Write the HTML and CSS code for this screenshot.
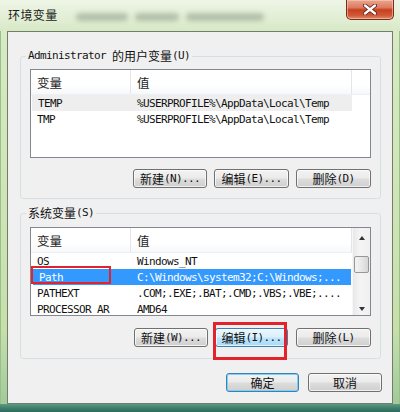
FILE: index.html
```html
<!DOCTYPE html>
<html lang="zh-CN">
<head>
<meta charset="utf-8">
<title>环境变量</title>
<link rel="stylesheet" href="styles.css">
</head>
<body>
<div class="window">
  <div class="titlebar">
    <span class="title">环境变量</span>
    <div class="ghost">
      <span class="blob b1"></span>
      <span class="blob b2"></span>
      <span class="blob b3"></span>
    </div>
    <button class="close" aria-label="关闭">
      <svg width="14" height="11" viewBox="0 0 14 11">
        <path d="M2 1.5 L12 9.5 M12 1.5 L2 9.5" stroke="#5a1a10" stroke-width="4" stroke-linecap="round"/>
        <path d="M2 1.5 L12 9.5 M12 1.5 L2 9.5" stroke="#ffffff" stroke-width="2.4" stroke-linecap="round"/>
      </svg>
    </button>
  </div>

  <div class="client">
    <fieldset class="group g-user">
      <legend><span class="a">Administrator </span>的用户变量<span class="a">(U)</span></legend>
      <div class="list">
        <div class="pane">
          <div class="header">
            <span class="hc c1">变量</span>
            <span class="hc c2">值</span>
            <span class="hc fill"></span>
          </div>
          <div class="row inactive"><span class="c1 a">TEMP</span><span class="c2 a">%USERPROFILE%\AppData\Local\Temp</span></div>
          <div class="row"><span class="c1 a">TMP</span><span class="c2 a">%USERPROFILE%\AppData\Local\Temp</span></div>
        </div>
      </div>
      <div class="btns">
        <button class="btn w74">新建<span class="a">(N)...</span></button>
        <button class="btn">编辑<span class="a">(E)...</span></button>
        <button class="btn">删除<span class="a">(D)</span></button>
      </div>
    </fieldset>

    <fieldset class="group g-sys">
      <legend>系统变量<span class="a">(S)</span></legend>
      <div class="list">
        <div class="pane narrow">
          <div class="header">
            <span class="hc c1">变量</span>
            <span class="hc c2">值</span>
          </div>
          <div class="row"><span class="c1 a">OS</span><span class="c2 a">Windows_NT</span></div>
          <div class="row selected"><span class="c1 a">Path</span><span class="c2 a">C:\Windows\system32;C:\Windows;...</span><span class="mark mark-path"></span></div>
          <div class="row"><span class="c1 a">PATHEXT</span><span class="c2 a">.COM;.EXE;.BAT;.CMD;.VBS;.VBE;....</span></div>
          <div class="row"><span class="c1 a">PROCESSOR_AR</span><span class="c2 a">AMD64</span></div>
        </div>
        <div class="scrollbar">
          <span class="arrow up"></span>
          <span class="track-gap"></span>
          <span class="thumb"></span>
          <span class="track"></span>
          <span class="arrow down"></span>
        </div>
      </div>
      <div class="btns">
        <button class="btn w74">新建<span class="a">(W)...</span></button>
        <span class="marked">
          <button class="btn hover">编辑<span class="a">(I)...</span></button>
          <span class="mark mark-btn"></span>
        </span>
        <button class="btn">删除<span class="a">(L)</span></button>
      </div>
    </fieldset>

    <div class="footer">
      <button class="btn ok">确定</button>
      <button class="btn cancel">取消</button>
    </div>
  </div>

  <div class="bottom-frame"></div>
</div>
</body>
</html>
```

FILE: styles.css
```css
html, body {
  margin: 0;
  padding: 0;
}

body {
  width: 400px;
  height: 412px;
  overflow: hidden;
  font-family: "Noto Sans CJK SC", "Noto Sans", sans-serif;
  font-size: 12px;
  color: #000;
}

.window {
  width: 400px;
  height: 412px;
  display: flex;
  flex-direction: column;
  background: linear-gradient(to bottom, #e6f0dc 0%, #d6e9c4 10%, #cfe5b8 45%, #c6dfac 80%, #9ec79a 100%);
  box-shadow: inset 1px 0 0 #9cbf86, inset -1px 0 0 #9cbf86;
}

/* ---------- title bar ---------- */
.titlebar {
  height: 31px;
  flex: none;
  display: flex;
  align-items: flex-start;
  padding-left: 8px;
  background: linear-gradient(to bottom, #eef5e6 0%, #e2eed4 60%, #d8e9c6 100%);
}

.title {
  margin-top: 7px;
  font-size: 12px;
  line-height: 16px;
  letter-spacing: 0.4px;
  color: #1a1a1a;
}

.ghost {
  display: flex;
  gap: 7px;
  margin-top: 13px;
  margin-left: 18px;
}

.blob {
  display: block;
  height: 8px;
  background: rgba(95, 110, 95, 0.36);
  filter: blur(2.5px);
  border-radius: 4px;
}
.b1 { width: 52px; }
.b2 { width: 44px; }
.b3 { width: 78px; }

.close {
  margin-left: auto;
  margin-right: 6px;
  width: 48px;
  height: 20px;
  padding: 0;
  border: 1px solid #7a2c1c;
  border-top: none;
  border-radius: 0 0 5px 5px;
  background: linear-gradient(to bottom, #eaa690 0%, #dc7a60 40%, #c8401f 52%, #cf5737 80%, #e08a68 100%);
  box-shadow: inset 0 0 0 1px rgba(255, 210, 190, 0.55);
  display: flex;
  align-items: center;
  justify-content: center;
}

/* ---------- client ---------- */
.client {
  flex: 1;
  margin: 0 7px;
  border: 1px solid #6f7f6c;
  background: #f0f0f0;
  padding-top: 17px;
  display: flex;
  flex-direction: column;
}

.a {
  font-family: "DejaVu Sans Mono", "Liberation Mono", monospace;
  font-size: 11px;
  letter-spacing: -0.62px;
}

.group {
  box-sizing: border-box;
  width: 361px;
  margin: 0 0 0 12px;
  border: 1px solid #d5dfe5;
  border-radius: 3px;
  padding: 6px 9px 10px 9px;
  min-width: 0;
}

.g-sys {
  margin-top: 7px;
  padding-top: 7px;
  padding-bottom: 11px;
}

legend {
  box-sizing: border-box;
  height: 14px;
  padding: 0 2px;
  margin-left: -4px;
  font-size: 12px;
  line-height: 14px;
  color: #111;
  overflow: visible;
}

legend .a {
  line-height: 14px;
  vertical-align: top;
}

/* ---------- list view ---------- */
.list {
  height: 89px;
  box-sizing: border-box;
  border: 1px solid #828790;
  background: #fff;
  display: flex;
  overflow: hidden;
}

.pane {
  flex: 1;
  display: flex;
  flex-direction: column;
  overflow: hidden;
}

.pane.narrow {
  flex: none;
  width: 321px;
}

.header {
  height: 25px;
  flex: none;
  display: flex;
  background: linear-gradient(to bottom, #ffffff 0%, #ffffff 60%, #f7f8fa 100%);
  border-bottom: 1px solid #eef0f3;
  box-sizing: border-box;
}

.hc {
  box-sizing: border-box;
  height: 100%;
  display: flex;
  align-items: center;
  padding-left: 6px;
  font-size: 12.5px;
  color: #1e1e1e;
  border-right: 1px solid #e3e5e8;
}

.header .c2 { width: 221px; }
.hc.fill { flex: 1; border-right: none; }

.c1 {
  box-sizing: border-box;
  width: 100px;
  flex: none;
  padding-left: 6px;
}

.c2 {
  box-sizing: border-box;
  padding-left: 6px;
  white-space: nowrap;
}

.row {
  position: relative;
  height: 16px;
  flex: none;
  display: flex;
  align-items: center;
  width: 321px;
  color: #111;
  white-space: nowrap;
}

.row.inactive {
  background: #eeeeee;
  margin-left: 1px;
  width: 320px;
}
.row.inactive .c1 { width: 99px; }

.row.selected {
  background: #3399ff;
  color: #fff;
  margin-left: 2px;
  width: 318px;
}
.row.selected .c1 { width: 98px; }

/* ---------- scrollbar ---------- */
.scrollbar {
  flex: 1;
  display: flex;
  flex-direction: column;
  align-items: center;
  background: linear-gradient(to right, #e8e8e8, #f4f4f4 40%, #f0f0f0);
  border-left: 1px solid #f6f6f6;
}

.arrow {
  height: 17px;
  width: 100%;
  flex: none;
  display: flex;
  align-items: center;
  justify-content: center;
}

.arrow::before {
  content: "";
  width: 0;
  height: 0;
  border-left: 3.5px solid transparent;
  border-right: 3.5px solid transparent;
}

.arrow.up::before { border-bottom: 4px solid #333; margin-top: 2px; }
.arrow.down::before { border-top: 4px solid #333; margin-top: 4px; }

.track-gap { height: 11px; flex: none; }
.track { flex: 1; }

.thumb {
  width: 13px;
  height: 15px;
  flex: none;
  border: 1px solid #979797;
  border-radius: 2px;
  background: linear-gradient(to right, #f3f3f3, #e8e8e8 50%, #d6d6d6);
}

/* ---------- buttons ---------- */
.btns {
  display: flex;
  justify-content: flex-end;
  gap: 7px;
  margin-top: 11px;
}

.g-sys .btns { margin-top: 12px; }

.btn {
  box-sizing: border-box;
  width: 75px;
  height: 19px;
  padding: 0;
  border: 1px solid #707070;
  border-radius: 3px;
  background: linear-gradient(to bottom, #f2f2f2 0%, #ebebeb 48%, #dddddd 52%, #cfcfcf 100%);
  box-shadow: inset 0 0 0 1px rgba(255, 255, 255, 0.7);
  font-family: "Noto Sans CJK SC", sans-serif;
  font-size: 12px;
  line-height: 17px;
  color: #111;
  white-space: nowrap;
  display: flex;
  align-items: center;
  justify-content: center;
}

.btn.w74 { width: 74px; }

.btn.hover {
  width: 73px;
  border-color: #3c7fb1;
  background: linear-gradient(to bottom, #eaf6fd 0%, #d9f0fc 48%, #bee6fd 52%, #a7d9f5 100%);
}

.marked {
  position: relative;
  display: flex;
  margin-right: 1px;
}

.mark {
  position: absolute;
  border: 2px solid #e3232c;
  box-sizing: border-box;
  pointer-events: none;
}

.mark-path {
  left: -2px;
  top: -3px;
  width: 80px;
  height: 18px;
}

.mark-btn {
  left: -2px;
  top: -6px;
  width: 74px;
  height: 38px;
  border-width: 3px;
}

.footer {
  display: flex;
  justify-content: flex-end;
  gap: 9px;
  margin-top: 14px;
  padding-right: 10px;
}

.btn.ok {
  width: 73px;
  border-color: #3c7fb1;
  box-shadow: inset 0 0 0 1px #7fd0f6;
}

.btn.cancel { width: 74px; }

.bottom-frame {
  height: 8px;
  flex: none;
  background: linear-gradient(to bottom, #5c9a84 0%, #3f7f6b 50%, #2f6a5a 100%);
}
```
